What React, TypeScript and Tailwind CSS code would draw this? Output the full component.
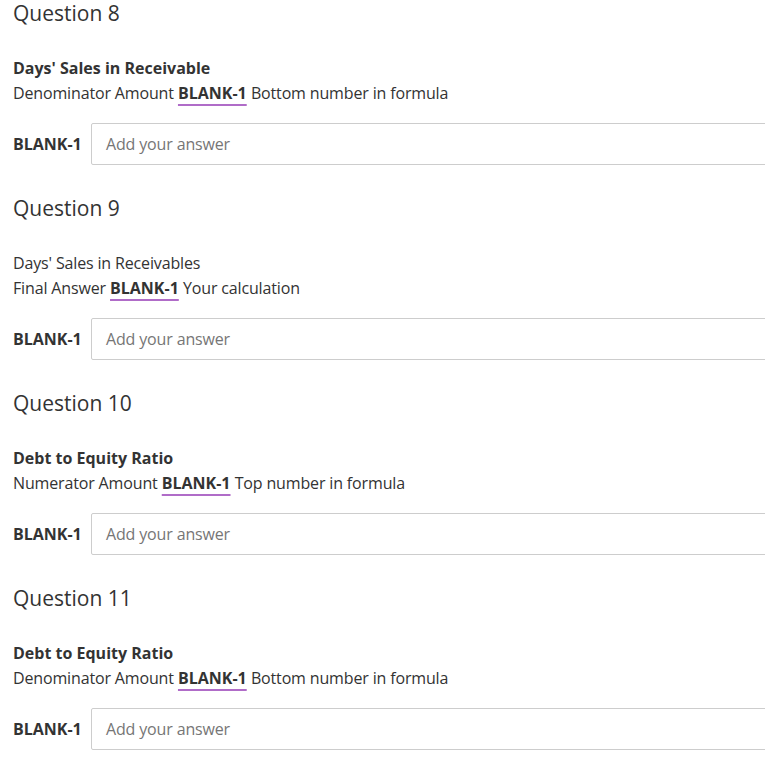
import React from "react";

type Q = { n: number; title: string; titleBold: boolean; pre: string; post: string };

const qs: Q[] = [
  { n: 8, title: "Days' Sales in Receivable", titleBold: true, pre: "Denominator Amount", post: "Bottom number in formula" },
  { n: 9, title: "Days' Sales in Receivables", titleBold: false, pre: "Final Answer", post: "Your calculation" },
  { n: 10, title: "Debt to Equity Ratio", titleBold: true, pre: "Numerator Amount", post: "Top number in formula" },
  { n: 11, title: "Debt to Equity Ratio", titleBold: true, pre: "Denominator Amount", post: "Bottom number in formula" },
];

export default function App() {
  return (
    <div
      className="w-[765px] h-[769px] overflow-hidden bg-white text-[#333333]"
      style={{ fontFamily: '"Open Sans", "Noto Sans", sans-serif' }}
    >
      <div className="-mt-[1px]">
        {qs.map((q) => (
          <div key={q.n} className="pl-[13px] h-[195px]">
            <h2 className="text-[21px] leading-[28px] font-normal text-[#333333]">Question {q.n}</h2>
            <div className="mt-[29px] text-[16px] leading-[25px]">
              <div className={q.titleBold ? "font-bold" : "font-normal tracking-[-0.15px]"}>{q.title}</div>
              <div>
                <span className="tracking-[-0.15px]">{q.pre}</span>{" "}
                <span className="font-bold underline decoration-[#b06cc8] decoration-2 underline-offset-[5px]">BLANK-1</span>{" "}
                <span className="tracking-[-0.15px]">{q.post}</span>
              </div>
            </div>
            <div className="mt-[17px] flex items-center">
              <span className="font-bold text-[16px] w-[78px] shrink-0">BLANK-1</span>
              <div className="w-[700px] h-[42px] shrink-0 border border-[#cdcdcd] rounded-[2px] flex items-center pl-[14px] text-[16px] text-[#767676] tracking-[-0.15px]">
                Add your answer
              </div>
            </div>
          </div>
        ))}
      </div>
    </div>
  );
}
